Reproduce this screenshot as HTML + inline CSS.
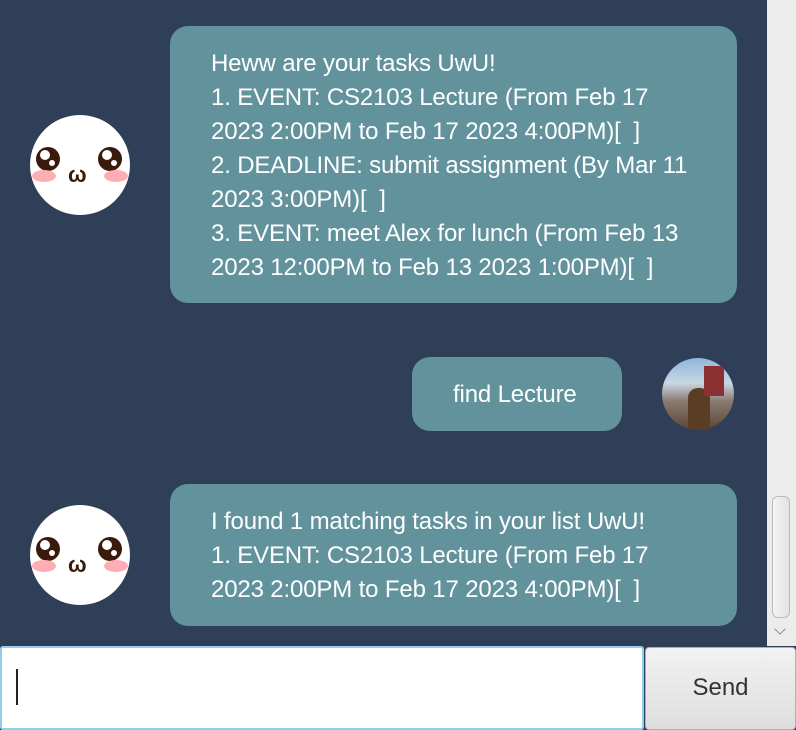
<!DOCTYPE html>
<html><head><style>
body{margin:0;width:796px;height:730px;background:#2e3f57;position:relative;overflow:hidden;font-family:"Liberation Sans",sans-serif}
.b{position:absolute;background:#62939d;border-radius:18px;color:#fff;font-size:24px;line-height:34px;padding:0 0 0 41px;box-sizing:border-box;letter-spacing:-0.15px;white-space:nowrap}
.face{position:absolute;width:100px;height:100px;border-radius:50%;background:#fff}
.eye{position:absolute;width:24px;height:24px;border-radius:50%;background:#3a1a0a;top:32px}
.eye:before{content:"";position:absolute;width:10px;height:10px;background:#fff;border-radius:50%;left:4px;top:3px}
.eye:after{content:"";position:absolute;width:6px;height:6px;background:#fff;border-radius:50%;left:13px;top:13px}
.ch{position:absolute;width:24px;height:12px;border-radius:50%;background:#ffadb5;top:55px}
.m{position:absolute;left:38px;top:50px;font-size:22px;font-weight:bold;color:#3a1a0a;line-height:20px}
.br{letter-spacing:3px}
</style></head><body>
<div class="b" style="left:170px;top:26px;width:567px;height:277px;padding-top:21px">Heww are your tasks UwU!<br>1. EVENT: CS2103 Lecture (From Feb 17<br>2023 2:00PM to Feb 17 2023 4:00PM)<span class="br">[ ]</span><br>2. DEADLINE: submit assignment (By Mar 11<br>2023 3:00PM)<span class="br">[ ]</span><br>3. EVENT: meet Alex for lunch (From Feb 13<br>2023 12:00PM to Feb 13 2023 1:00PM)<span class="br">[ ]</span></div>
<div class="face" style="left:30px;top:115px"><div class="eye" style="left:6px"></div><div class="eye" style="left:68px"></div><div class="ch" style="left:2px"></div><div class="ch" style="left:74px"></div><div class="m">ω</div></div>
<div class="b" style="left:412px;top:357px;width:210px;height:74px;padding-top:21px">find Lecture</div>
<div style="position:absolute;left:662px;top:358px;width:72px;height:72px;border-radius:50%;background:linear-gradient(180deg,#8fb6dc 0%,#c9d6e3 35%,#8a7a70 60%,#5a4636 100%);overflow:hidden"><div style="position:absolute;left:26px;top:30px;width:22px;height:42px;background:#5a3d24;border-radius:10px 10px 0 0"></div><div style="position:absolute;left:42px;top:8px;width:20px;height:30px;background:#8a3030"></div></div>
<div class="b" style="left:170px;top:484px;width:567px;height:142px;padding-top:21px">I found 1 matching tasks in your list UwU!<br>1. EVENT: CS2103 Lecture (From Feb 17<br>2023 2:00PM to Feb 17 2023 4:00PM)<span class="br">[ ]</span></div>
<div class="face" style="left:30px;top:505px"><div class="eye" style="left:6px"></div><div class="eye" style="left:68px"></div><div class="ch" style="left:2px"></div><div class="ch" style="left:74px"></div><div class="m">ω</div></div>
<div style="position:absolute;left:767px;top:0;width:29px;height:646px;background:#ececec"></div>
<div style="position:absolute;left:772px;top:496px;width:18px;height:122px;border:1px solid #bbb;border-radius:6px;background:linear-gradient(90deg,#f4f4f4,#e2e2e2);box-sizing:border-box"></div>
<div style="position:absolute;left:775px;top:624px;width:9px;height:9px;border-right:1.5px solid #777;border-bottom:1.5px solid #777;transform:rotate(45deg) scale(0.8)"></div>
<div style="position:absolute;left:0;top:646px;width:644px;height:84px;background:#fff;border:2px solid #8fd0ea;box-sizing:border-box;border-radius:3px"></div>
<div style="position:absolute;left:16px;top:669px;width:1.5px;height:36px;background:#222"></div>
<div style="position:absolute;left:645px;top:647px;width:151px;height:83px;background:linear-gradient(#f2f2f2,#dedede);border:1px solid #b0b0b0;box-sizing:border-box;border-radius:4px;color:#333;font-size:24px;text-align:center;line-height:80px">Send</div>
</body></html>
